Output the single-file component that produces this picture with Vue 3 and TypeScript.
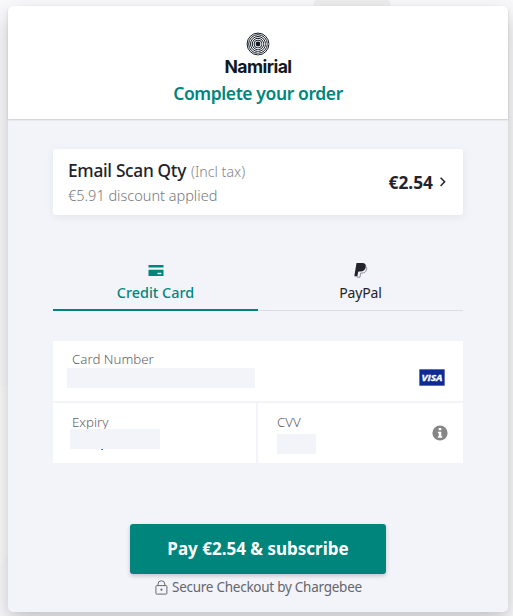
<script setup lang="ts">
import { ref } from 'vue'

type Method = 'card' | 'paypal'

const active = ref<Method>('card')
const price = '€2.54'
const rings: number[] = [3.9, 5.7, 7.5, 9.3, 10.9]
</script>

<template>
  <div class="page">
    <svg class="backdrop" width="513" height="616" viewBox="0 0 513 616">
      <circle cx="352" cy="18" r="41" fill="#eeeeee" />
      <path d="M0 387 L8 384 V554 L0 565Z" fill="#fff" fill-opacity=".35" />
    </svg>
    <main class="checkout">
      <header class="header">
        <svg class="mark" width="24" height="24" viewBox="0 0 24 24">
          <circle cx="12" cy="12" r="2.4" fill="#111923" />
          <circle v-for="r in rings" :key="r" cx="12" cy="12" :r="r" fill="none" stroke="#111923" stroke-width="1" />
          <path d="M15 12H23M12 15V23" stroke="#fff" stroke-width=".8" opacity=".7" />
        </svg>
        <div class="brand">Namirial</div>
        <h1 class="title">Complete your order</h1>
      </header>

      <div class="body">
        <section class="order">
          <div class="item">
            <div class="name"><span class="product">Email Scan Qty</span><span class="tax">(Incl tax)</span></div>
            <div class="discount">€5.91 discount applied</div>
          </div>
          <div class="price">{{ price }}</div>
          <svg class="chevron" width="8" height="12" viewBox="0 0 8 12">
            <path d="M1.6 1.7 L5.6 5.8 L1.6 9.9" fill="none" stroke="#22232b" stroke-width="1.5" />
          </svg>
        </section>

        <nav class="tabs">
          <button class="tab" :class="{ active: active === 'card' }" @click="active = 'card'">
            <svg width="16" height="16" viewBox="0 0 16 16">
              <path d="M.5 3H15.5V5.4H.5ZM.5 7.7H15.5V14H.5Z" fill="#00857d" />
              <rect x="9.3" y="10.8" width="4.2" height="1.5" rx=".7" fill="#f3f4f9" />
            </svg>
            <span class="tab-card">Credit Card</span>
          </button>
          <button class="tab" :class="{ active: active === 'paypal' }" @click="active = 'paypal'">
            <svg width="16" height="16" viewBox="0 0 16 16">
              <path d="M3.5 1H9.3C12.2 1 13.4 2.7 12.7 5.4C12 8.2 10.2 9.5 7.4 9.5H5.9C5.4 9.5 5.2 9.8 5.1 10.2L4.4 14.3H1.3Z" fill="#22232b" />
              <path d="M13 4.6C13.8 5.4 13.9 6.7 13.4 8C12.7 10.1 11.4 11 9.2 11H7.7L7 15.2H3.9L4.1 14.2" fill="none" stroke="#747b8c" stroke-width=".8" />
            </svg>
            <span class="tab-paypal">PayPal</span>
          </button>
        </nav>

        <section class="fields">
          <div class="field wide">
            <label class="l-number">Card Number</label>
            <div class="mask number"></div>
            <svg class="visa" width="26" height="17" viewBox="0 0 26 17">
              <rect x=".3" y=".3" width="25.4" height="16.4" rx=".6" fill="#102a94" stroke="#7c89c4" stroke-width=".5" />
              <text x="2.4" y="12" textLength="21" lengthAdjust="spacingAndGlyphs">VISA</text>
            </svg>
          </div>
          <div class="field">
            <label class="l-expiry">Expiry</label>
            <div class="mask expiry"></div>
            <i class="speck"></i>
          </div>
          <div class="field">
            <label class="l-cvv">CVV</label>
            <div class="mask cvv"></div>
            <svg class="info" width="16" height="16" viewBox="0 0 16 16">
              <circle cx="8" cy="8" r="7.6" fill="#868686" />
              <path d="M6.7 3.1H9.3V5.3H6.7ZM6 6.7H9.3V11.2H10.2V12.7H5.9V11.2H6.8V8.2H6Z" fill="#fff" />
            </svg>
          </div>
        </section>

        <button class="pay"><span>Pay {{ price }} &amp; subscribe</span></button>

        <footer class="secure">
          <svg width="13" height="15" viewBox="0 0 13 15">
            <rect x=".9" y="5.6" width="11" height="8.5" rx=".8" fill="none" stroke="#68696f" />
            <path d="M3 5.5V4Q3 .8 6.4 .8T9.8 4V5.5M6.4 8.6V10.8M5.3 9.7H7.5" fill="none" stroke="#68696f" />
          </svg>
          <span>Secure Checkout by Chargebee</span>
        </footer>
      </div>
    </main>
  </div>
</template>

<style>
html, body { margin: 0; overflow: hidden; }
</style>

<style scoped>
.page {
  position: relative;
  box-sizing: border-box;
  width: 513px;
  height: 616px;
  padding: 6px 5px 4px 8px;
  overflow: hidden;
  background: #f9f9fb;
  font-family: "Noto Sans", "Open Sans", sans-serif;
  color: #22232b;
}
.backdrop { position: absolute; inset: 0; }
.checkout {
  position: relative;
  width: 500px;
  height: 606px;
  border-radius: 5px;
  background: #f3f4f9;
  box-shadow: 0 10px 24px rgba(0, 0, 0, .2), 0 4px 8px rgba(0, 0, 0, .03);
}
.header {
  position: relative;
  display: flex;
  flex-direction: column;
  align-items: center;
  box-sizing: border-box;
  height: 113px;
  padding-top: 26px;
  border-radius: 5px 5px 0 0;
  background: #fff;
  box-shadow: 0 1px 2px rgba(0, 0, 0, .17);
}
.mark { display: block; }
.brand {
  height: 22px;
  font: 700 17.6px/22px Inter, sans-serif;
  letter-spacing: -.55px;
  color: #111923;
}
.title {
  margin: 3px 0 0;
  font-size: 17.5px;
  font-weight: 650;
  line-height: 24px;
  letter-spacing: -.4px;
  white-space: nowrap;
  color: #00857d;
}
.body { padding: 30px 45px 0; }
.order {
  display: flex;
  align-items: center;
  box-sizing: border-box;
  height: 66px;
  padding: 0 16px 0 15px;
  border-radius: 3px;
  background: #fff;
  box-shadow: 0 2px 8px rgba(40, 45, 80, .07);
}
.item { flex: 1; white-space: nowrap; }
.name { display: flex; align-items: baseline; gap: 5px; height: 24px; line-height: 24px; }
.product { font-size: 17.3px; font-weight: 500; letter-spacing: -.3px; }
.tax { font-size: 14.2px; font-weight: 300; color: #85868a; }
.discount { height: 22px; padding-top: 1px; margin-bottom: -1px; font-size: 14.5px; line-height: 22px; font-weight: 300; color: #77787c; }
.price { font-size: 17.3px; font-weight: 700; }
.chevron { margin-left: 6px; }
.tabs {
  display: grid;
  grid-template-columns: 205px 205px;
  height: 62px;
  margin-top: 34px;
  background: linear-gradient(#dcdde3, #dcdde3) 0 61px / 100% 1px no-repeat;
}
.tab {
  display: flex;
  flex-direction: column;
  align-items: center;
  padding: 13px 0 0;
  border: 0;
  border-bottom: 2px solid transparent;
  background: none;
  font: 400 14px/20px "Noto Sans", sans-serif;
  color: #22232b;
}
.tab span { margin-top: 5px; }
.tab.active { border-color: #00857d; color: #00857d; }
.tab-card { font-size: 14.4px; font-weight: 500; }
.tab-paypal { letter-spacing: -.15px; }
.fields {
  display: grid;
  grid-template-columns: 203px 205px;
  gap: 2px;
  margin-top: 30px;
}
.field { position: relative; height: 60px; background: #fff; }
.wide { grid-column: 1 / 3; }
label {
  display: block;
  padding: 9px 0 0 19px;
  font-size: 13.3px;
  line-height: 20px;
  font-weight: 300;
  color: #5f6065;
}
.l-number { padding: 8px 0 1px 19px; }
.mask { height: 20px; background: #f3f4f9; position: relative; }
.number { width: 188px; margin: -2px 0 0 14px; }
.expiry { width: 90px; margin: -3px 0 0 17px; }
.cvv { width: 39px; margin: 2px 0 0 19px; }
.speck { position: absolute; left: 48px; top: 46px; width: 2px; height: 1px; background: linear-gradient(90deg, #c98325 50%, #365f9c 50%); }
.visa { position: absolute; right: 18px; top: 28px; }
.visa text { font: italic 700 9.5px "Open Sans", sans-serif; fill: #fff; stroke: #fff; stroke-width: .3; }
.info { position: absolute; right: 15px; top: 22px; }
.pay {
  display: block;
  width: 256px;
  height: 50px;
  margin: 61px 0 0 77px;
  padding: 0;
  border: 0;
  border-radius: 3px;
  background: #00857d;
  box-shadow: 0 2px 4px rgba(0, 0, 0, .2);
  font: 700 17px/50px "Noto Sans", sans-serif;
  color: #fff;
}
.secure {
  display: flex;
  align-items: center;
  gap: 4px;
  height: 24px;
  margin: 1px 0 0 102px;
  font-size: 13.5px;
  line-height: 24px;
  letter-spacing: -.26px;
  color: #65666b;
  white-space: nowrap;
}
.secure span { margin-top: -1px; }
</style>
